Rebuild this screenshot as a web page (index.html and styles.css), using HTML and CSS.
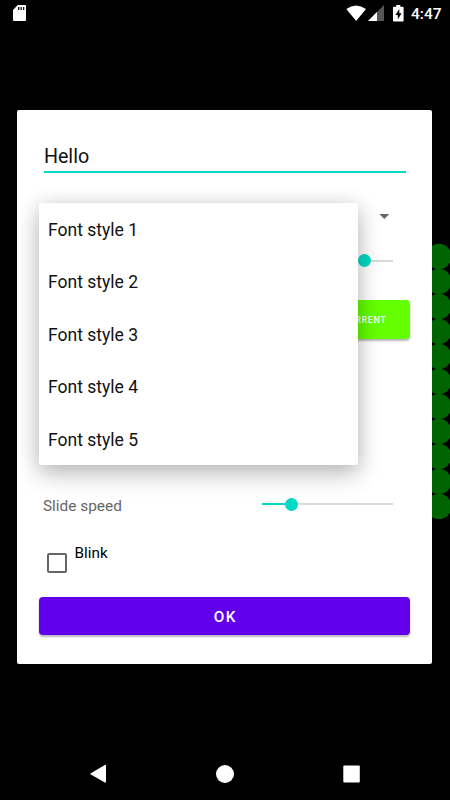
FILE: index.html
```html
<!DOCTYPE html>
<html lang="en">
<head>
<meta charset="utf-8">
<title>Text settings</title>
<link rel="stylesheet" href="styles.css">
</head>
<body>
<div class="screen">
  <svg class="led-board" width="18" height="277" viewBox="432 243 18 277" fill="#006400">
    <circle cx="438.8" cy="256.5" r="12.7"/><circle cx="438.8" cy="281.5" r="12.7"/><circle cx="438.8" cy="306.5" r="12.7"/><circle cx="438.8" cy="331.5" r="12.7"/><circle cx="438.8" cy="356.5" r="12.7"/><circle cx="438.8" cy="381.4" r="12.7"/><circle cx="438.8" cy="406.4" r="12.7"/><circle cx="438.8" cy="431.4" r="12.7"/><circle cx="438.8" cy="456.4" r="12.7"/><circle cx="438.8" cy="481.4" r="12.7"/><circle cx="438.8" cy="506.4" r="12.7"/>
  </svg>
  <header class="status">
    <svg width="13" height="16" viewBox="0 0 13 16"><path fill="#fff" d="M4.8 0H12q1 0 1 1v14q0 1-1 1H1q-1 0-1-1V5z"/><path fill="#111" d="M5 2h1.4v3H5zM7.5 2h1.3v3H7.5zM10 2h1.3v3H10z"/></svg>
    <div class="status-right">
      <svg width="50" height="18" viewBox="346 4 50 18"><path fill="#fff" d="M346.3 9Q356 2 366 9L356.2 21z"/><path fill="#555" d="M384 5v16h-16z"/><path fill="#fff" d="M377 12v9h-9z"/></svg>
      <svg class="battery" width="11" height="17" viewBox="0 0 11 17"><path fill="#fff" d="M3.2 0h4.1v1.7h2.5q.8 0 .8.8v13.2q0 .8-.8.8H.8q-.8 0-.8-.8V2.500q0-.8.8-.8h2.400z"/><path fill="#000" d="M6.300 4 2.400 10h2.400v4.500L8.600 8.300H6.300z"/></svg>
      <span class="clock">4:47</span>
    </div>
  </header>
  <main class="dialog">
    <div class="text-field">Hello</div>
    <div class="select-row"><i class="caret"></i></div>
    <div class="slider-row"><div class="slider size"><i></i></div></div>
    <div class="color-row"><div class="color-button">CURRENT</div></div>
    <div class="speed-row"><span>Slide speed</span><div class="slider speed"><i></i></div></div>
    <div class="blink-row"><i class="checkbox"></i><span>Blink</span></div>
    <div class="ok">OK</div>
    <div class="menu">
      <div>Font style 1</div><div>Font style 2</div><div>Font style 3</div><div>Font style 4</div><div>Font style 5</div>
    </div>
  </main>
  <nav class="nav">
    <svg width="18" height="20" viewBox="0 0 18 20"><path fill="#fff" d="M.8 9.200 14.800 1q1.200-.6 1.200.7v16q0 1.300-1.200.7L.8 10.500q-.9-.6 0-1.300z"/></svg>
    <svg width="20" height="20" viewBox="0 0 20 20"><circle cx="10" cy="10" r="9" fill="#fff"/></svg>
    <svg width="18" height="18" viewBox="0 0 18 18"><rect x="1.3" y=".5" width="16.500" height="17" rx="1" fill="#fff"/></svg>
  </nav>
</div>
</body>
</html>
```
FILE: styles.css
```css
* { box-sizing: border-box; }
body { margin: 0; background: #000; font-family: Roboto, sans-serif; }
.screen { position: relative; width: 450px; height: 800px; background: #000; overflow: hidden; display: flex; flex-direction: column; }
.led-board { position: absolute; left: 432px; top: 243px; }
.status { height: 109.5px; flex: none; padding: 5px 8.5px 0 13px; display: flex; justify-content: space-between; align-items: flex-start; }
.status-right { display: flex; align-items: flex-start; color: #fff; }
.status-right svg { margin-top: -1px; }
.status-right .battery { margin: 0 6.500px 0 -3px; }
.clock { font-size: 15.5px; font-weight: 500; line-height: 18px; }
.dialog { position: relative; width: 415.2px; height: 554.5px; flex: none; margin-left: 17.3px; padding: 29px 22.200px 0; background: #fff; border-radius: 2px; display: flex; flex-direction: column; }
.text-field { height: 34px; margin: 0 4.400px 1px; padding-top: 6.600px; border-bottom: 2px solid #03dac5; font-size: 19.700px; line-height: 24px; color: #111; flex: none; }
.select-row { height: 66px; flex: none; display: flex; justify-content: flex-end; padding: 40px 20.500px 0 0; }
.caret { width: 11px; height: 5.500px; background: #666; clip-path: polygon(0 0, 100% 0, 50% 100%); }
.slider-row { height: 60.800px; flex: none; display: flex; justify-content: flex-end; padding: 20.200px 17px 0 0; }
.slider { position: relative; width: 131px; height: 2px; }
.slider i { position: absolute; top: -5.500px; width: 13px; height: 13px; border-radius: 50%; background: #03dac5; }
.size { background: linear-gradient(90deg, #03dac5 78%, #dadada 78%); }
.size i { left: 95.800px; }
.speed { background: linear-gradient(90deg, #03dac5 22%, #dadada 22%); }
.speed i { left: 22.500px; }
.color-row { height: 191.700px; flex: none; display: flex; justify-content: flex-end; }
.color-button { width: 90px; height: 38.500px; border-radius: 4px; background: #64ff00; color: #fff; font-size: 8.750px; font-weight: 500; letter-spacing: .8px; line-height: 40px; text-align: right; padding-right: 23.700px; box-shadow: 0 2px 2px rgba(0,0,0,.28); }
.speed-row { height: 50px; flex: none; display: flex; justify-content: space-between; padding: 11.500px 17px 0 3.500px; font-size: 15.400px; line-height: 18px; color: #666; }
.speed-row span { margin-top: -6px; }
.blink-row { height: 55px; flex: none; display: flex; padding-left: 7.500px; font-size: 15.300px; line-height: 18px; color: #000; }
.blink-row span { margin: 2px 0 0 7.500px; }
.checkbox { width: 20px; height: 20px; margin-top: 11.500px; border: 2px solid #666; border-radius: 2px; }
.ok { height: 38.500px; flex: none; border-radius: 4px; background: #6200ee; box-shadow: 0 2px 2px rgba(0,0,0,.28); color: #fff; font-size: 15.300px; font-weight: 500; letter-spacing: 1.600px; line-height: 40px; text-align: center; padding-left: 1px; }
.menu { position: absolute; left: 22px; top: 93.500px; width: 318.700px; height: 262px; background: #fff; border-radius: 2px; box-shadow: 0 9px 24px rgba(0,0,0,.24), 0 1px 20px rgba(0,0,0,.1); display: flex; flex-direction: column; }
.menu div { flex: 1; display: flex; align-items: center; padding: 1.500px 0 0 8.700px; font-size: 17.550px; color: #111; }
.nav { margin-top: auto; height: 52px; padding: 0 90px 0 90px; display: flex; justify-content: space-between; align-items: center; }
```
